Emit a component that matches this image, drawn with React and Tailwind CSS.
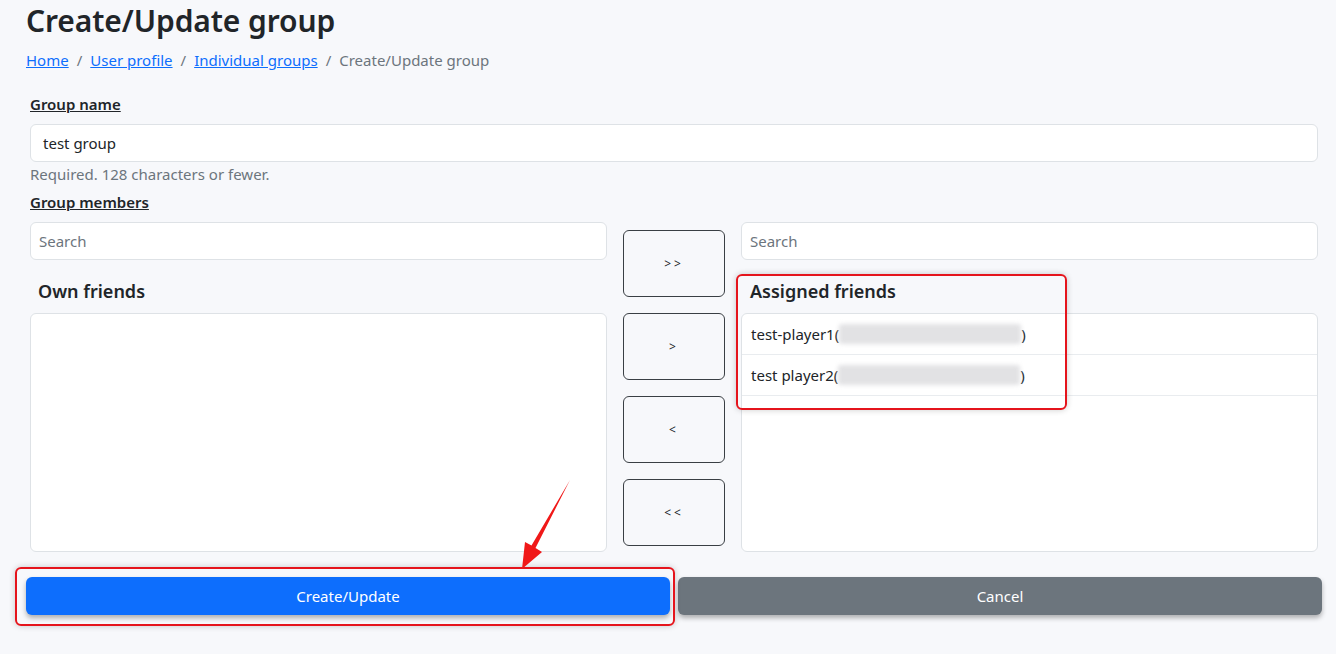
import React from 'react';

const font = { fontFamily: '"Noto Sans", "Open Sans", sans-serif' };

const MoveButton = ({ label }) => (
    <button className="h-[67px] w-full rounded-[6px] border border-[#3a3f44] bg-transparent text-[12px] text-[#212529] tracking-[3px]">
        {label}
    </button>
);

const Redacted = ({ width }) => (
    <span className="inline-block h-[20px] align-middle rounded-[3px] bg-[#e2e2e4] blur-[2px]" style={{ width }} />
);

const App = () => {
    const assigned = [
        { id: 1, name: 'test-player1', blur: 182 },
        { id: 2, name: 'test player2', blur: 182 },
    ];

    return (
        <div className="relative w-[1336px] h-[654px] overflow-hidden bg-[#f7f8fb] text-[#212529]" style={font}>
            <div className="pl-[26px] pr-[14px]">
                {/* Title + breadcrumb */}
                <h1 className="mt-[3px] h-[36px] text-[30px] leading-[36px] font-semibold tracking-[-0.1px]">Create/Update group</h1>
                <nav className="mt-[9px] h-[24px] text-[15px] leading-[24px] flex items-center">
                    <a className="text-[#0d6efd] underline">Home</a>
                    <span className="px-[8px] text-[#6c757d]">/</span>
                    <a className="text-[#0d6efd] underline">User profile</a>
                    <span className="px-[8px] text-[#6c757d]">/</span>
                    <a className="text-[#0d6efd] underline">Individual groups</a>
                    <span className="px-[8px] text-[#6c757d]">/</span>
                    <span className="text-[#6c757d]">Create/Update group</span>
                </nav>

                {/* Form */}
                <div className="px-[4px]">
                    <div className="mt-[21px] h-[22px] text-[15px] leading-[22px] font-semibold underline">Group name</div>
                    <div className="mt-[9px] h-[38px] rounded-[6px] border border-[#dee2e6] bg-white px-[12px] flex items-center text-[15px]">
                        test group
                    </div>
                    <div className="mt-[1px] h-[22px] text-[15px] leading-[22px] text-[#6c757d]">Required. 128 characters or fewer.</div>
                    <div className="mt-[6px] h-[22px] text-[15px] leading-[22px] font-semibold underline">Group members</div>

                    <div className="mt-[9px] grid grid-cols-[577px_102px_577px] gap-x-[16px]">
                        {/* Own friends */}
                        <div className="flex flex-col">
                            <div className="h-[38px] rounded-[6px] border border-[#dee2e6] bg-white px-[8px] flex items-center text-[15px] text-[#6c757d]">
                                Search
                            </div>
                            <div className="h-[53px] pt-[9px] px-[8px] flex items-center text-[18px] font-semibold">Own friends</div>
                            <div className="h-[239px] rounded-[6px] border border-[#dee2e6] bg-white" />
                        </div>

                        {/* Move buttons */}
                        <div className="pt-[8px] flex flex-col gap-[16px]">
                            <MoveButton label=">>" />
                            <MoveButton label=">" />
                            <MoveButton label="<" />
                            <MoveButton label="<<" />
                        </div>

                        {/* Assigned friends */}
                        <div className="flex flex-col">
                            <div className="h-[38px] rounded-[6px] border border-[#dee2e6] bg-white px-[8px] flex items-center text-[15px] text-[#6c757d]">
                                Search
                            </div>
                            <div className="h-[53px] pt-[9px] px-[9px] flex items-center text-[18px] font-semibold">Assigned friends</div>
                            <div className="h-[239px] rounded-[6px] border border-[#dee2e6] bg-white overflow-hidden">
                                {assigned.map(friend => (
                                    <div key={friend.id} className="h-[41px] border-b border-[#e9ecef] px-[9px] flex items-center text-[15px]">
                                        <span>{friend.name}(</span>
                                        <Redacted width={friend.blur} />
                                        <span>)</span>
                                    </div>
                                ))}
                            </div>
                        </div>
                    </div>
                </div>

                {/* Actions */}
                <div className="mt-[25px] grid grid-cols-2 gap-x-[8px]">
                    <button className="h-[38px] rounded-[6px] bg-[#0d6efd] text-white text-[15px] shadow-[0_3px_5px_rgba(0,0,0,0.3)]">Create/Update</button>
                    <button className="h-[38px] rounded-[6px] bg-[#6c757d] text-white text-[15px] shadow-[0_3px_5px_rgba(0,0,0,0.3)]">Cancel</button>
                </div>
            </div>

            {/* Annotation overlays */}
            <div className="absolute left-[736px] top-[274px] w-[331px] h-[136px] rounded-[6px] border-2 border-[#e5141c] shadow-[0_0_6px_rgba(0,0,0,0.2)]" />
            <div className="absolute left-[15px] top-[567px] w-[660px] h-[59px] rounded-[6px] border-2 border-[#e5141c] shadow-[0_0_6px_rgba(0,0,0,0.2)]" />
            <svg className="absolute left-0 top-0 pointer-events-none" width="1336" height="654">
                <polygon points="570,480 535.5,548 542,552 522,569 525,542 531.5,545.5" fill="#f01818" />
            </svg>
        </div>
    );
};

export default App;
